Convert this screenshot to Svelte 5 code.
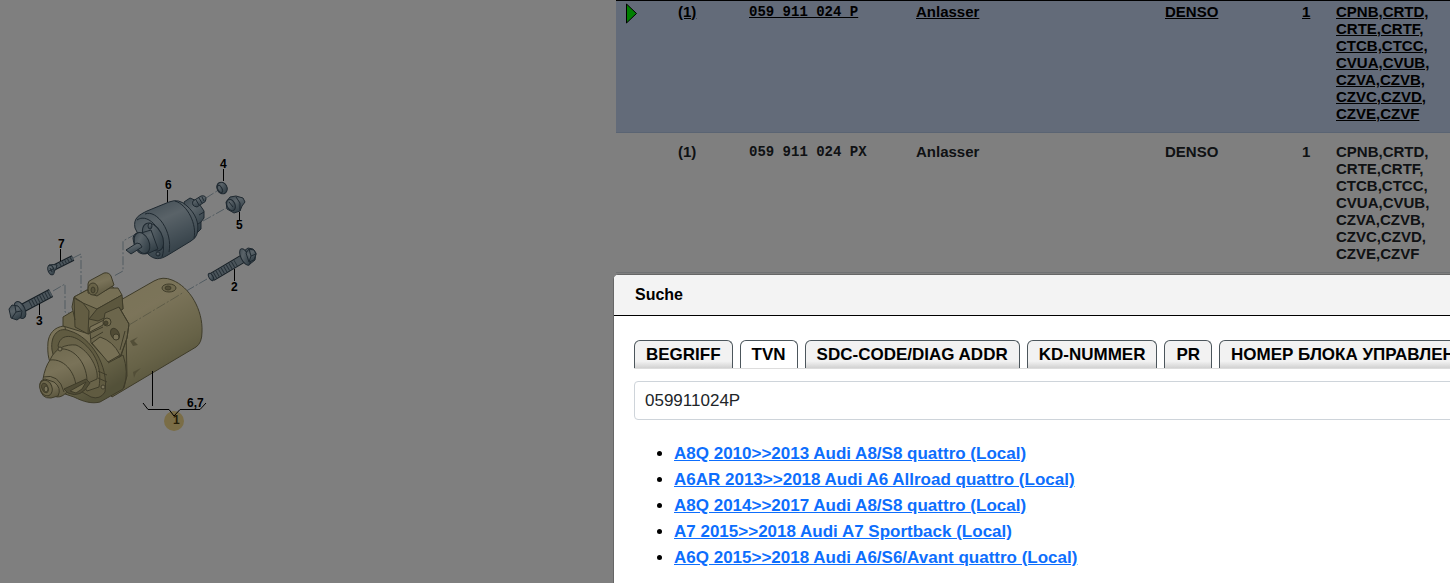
<script lang="ts">
	type Part = {
		qty: string;
		number: string;
		name: string;
		remark: string;
		count: string;
		engines: string[];
		selected?: boolean;
	};

	const engines = [
		'CPNB,CRTD,',
		'CRTE,CRTF,',
		'CTCB,CTCC,',
		'CVUA,CVUB,',
		'CZVA,CZVB,',
		'CZVC,CZVD,',
		'CZVE,CZVF'
	];

	const parts: Part[] = [
		{ qty: '(1)', number: '059 911 024 P', name: 'Anlasser', remark: 'DENSO', count: '1', engines, selected: true },
		{ qty: '(1)', number: '059 911 024 PX', name: 'Anlasser', remark: 'DENSO', count: '1', engines }
	];

	const tabs = ['BEGRIFF', 'TVN', 'SDC-CODE/DIAG ADDR', 'KD-NUMMER', 'PR', 'НОМЕР БЛОКА УПРАВЛЕНИЯ'];

	const results = [
		'A8Q 2010>>2013 Audi A8/S8 quattro (Local)',
		'A6AR 2013>>2018 Audi A6 Allroad quattro (Local)',
		'A8Q 2014>>2017 Audi A8/S8 quattro (Local)',
		'A7 2015>>2018 Audi A7 Sportback (Local)',
		'A6Q 2015>>2018 Audi A6/S6/Avant quattro (Local)'
	];

	let activeTab = $state('TVN');
	let query = $state('059911024P');
</script>

<div class="page">
	<section class="drawing">
		<svg viewBox="0 0 270 440" width="270" height="440" role="img" aria-label="Anlasser">
			<defs>
				<linearGradient id="housing" x1="0" y1="0" x2="0.5" y2="1">
					<stop offset="0" stop-color="#f2e4ae"></stop>
					<stop offset="0.4" stop-color="#f8e9b4"></stop>
					<stop offset="0.75" stop-color="#cfc690"></stop>
					<stop offset="1" stop-color="#a7a273"></stop>
				</linearGradient>
				<linearGradient id="cone" x1="0.3" y1="0" x2="0.7" y2="1">
					<stop offset="0" stop-color="#e0d4a0"></stop>
					<stop offset="0.4" stop-color="#f4e6b2"></stop>
					<stop offset="1" stop-color="#b6ac7c"></stop>
				</linearGradient>
				<linearGradient id="steel" x1="0.2" y1="0" x2="0.7" y2="1">
					<stop offset="0" stop-color="#8298a6"></stop>
					<stop offset="0.35" stop-color="#b4c6d1"></stop>
					<stop offset="0.65" stop-color="#8ba1af"></stop>
					<stop offset="1" stop-color="#5c7584"></stop>
				</linearGradient>
			</defs>

			<g class="guide">
				<path d="M136 234 L123 241 V271 L114 276"></path>
				<path d="M73 258 L81 254 V294"></path>
				<path d="M53 291 L65 284 V312 L72 314"></path>
				<path d="M207 279 L176 297"></path>
				<path d="M206 198 L217 191"></path>
				<path d="M203 221 L228 207"></path>
			</g>

			<!-- solenoid -->
			<g class="part" fill="url(#steel)">
				<path d="M184 202 L190 198 L197 201 L202 208 L204 211 V218 L201 222 V229 L197 233 L190 230 Z"></path>
				<path d="M193 201 L201 196 Q206 195 206 199 Q206 202 203 203 L197 207 Q191 206 193 201 Z"></path>
				<path d="M135 228 C133 218 139 215 147 211 L169 202 Q179 198 187 206 C195 213 200 223 197 234 Q196 238 191 241 L168 255 C160 260 154 260 148 254 Z"></path>
				<path d="M137 220 C150 211 169 237 162 257" fill="none"></path>
				<path d="M145 214 C157 209 173 232 169 252" fill="none"></path>
				<path d="M175 201 C188 205 197 225 194 238" fill="none"></path>
				<ellipse cx="153" cy="237" rx="9" ry="15" transform="rotate(-28 153 237)"></ellipse>
				<path d="M133 238 Q134 232 141 233 L151 230 L158 249 L149 253 Q135 258 133 238 Z"></path>
				<ellipse cx="142" cy="243" rx="7" ry="11" transform="rotate(-25 142 243)"></ellipse>
				<path d="M126 250 L137 243 Q141 243 142 247 L131 254 Z"></path>
				<ellipse cx="150" cy="226" rx="2" ry="3"></ellipse>
				<circle cx="158" cy="254" r="2"></circle>
				<path d="M196 200 l3 5 M199 198 l3 5 M202 197 l2 4 M199 215 l5 -3 M198 224 l3 -2"></path>
			</g>

			<!-- nut and cap -->
			<g class="part" fill="url(#steel)">
				<ellipse cx="222" cy="188" rx="5" ry="6" transform="rotate(-30 222 188)"></ellipse>
				<ellipse cx="220" cy="189" rx="2" ry="4" transform="rotate(-30 220 189)"></ellipse>
				<path d="M226 202 L230 197 L236 196 L243 198 L245 202 L242 206 L240 211 L234 213 L227 209 Z"></path>
				<ellipse cx="231" cy="205" rx="4" ry="6" transform="rotate(-25 231 205)"></ellipse>
				<path d="M236 197 L240 203 L240 211 M229 202 l4 5"></path>
			</g>

			<!-- bolt 2 -->
			<g class="bolt">
				<path class="shaft-edge" d="M212 277 L244 258"></path>
				<path class="shaft" d="M212 277 L244 258"></path>
				<path class="thread" d="M212 277 L236 263"></path>
			</g>
			<g class="part" fill="url(#steel)">
				<ellipse cx="211" cy="277" rx="2" ry="4" transform="rotate(-30 211 277)"></ellipse>
				<path d="M244 251 L248 248 L253 249 L256 253 L255 260 L250 264 L245 263 Z"></path>
				<ellipse cx="245" cy="257" rx="4" ry="9" transform="rotate(-26 245 257)"></ellipse>
				<path d="M246 253 L249 249 L254 250 L256 254 L254 260 L249 262 Z"></path>
				<path d="M249 249 L251 256 L249 262 M251 256 L256 254"></path>
			</g>

			<!-- bolt 3 -->
			<g class="bolt">
				<path class="shaft-edge" d="M21 309 L51 293"></path>
				<path class="shaft" d="M21 309 L51 293"></path>
				<path class="thread" d="M30 304 L51 293"></path>
			</g>
			<g class="part" fill="url(#steel)">
				<ellipse cx="20" cy="310" rx="5" ry="9" transform="rotate(-25 20 310)"></ellipse>
				<path d="M9 309 L12 305 L18 306 L22 311 L21 317 L17 320 L11 318 Z"></path>
				<path d="M15 306 L16 312 L12 318 M16 312 L21 311"></path>
			</g>

			<!-- screw 7 -->
			<g class="bolt small">
				<path class="shaft-edge" d="M53 268 L73 258"></path>
				<path class="shaft" d="M53 268 L73 258"></path>
				<path class="thread" d="M60 265 L73 258"></path>
			</g>
			<g class="part" fill="url(#steel)">
				<path d="M49 265 Q54 264 57 265 L56 269 L52 274 Z"></path>
				<ellipse cx="51" cy="270" rx="3" ry="5" transform="rotate(-20 51 270)"></ellipse>
				<path d="M50 268 l2 4 M49 271 l4 -2"></path>
			</g>

			<!-- starter motor -->
			<g class="starter">
				<path fill="url(#housing)" d="M112 305 L154 281 Q163 276 172 280 C190 287 203 310 202 332 Q202 343 196 347 L112 397 L90 370 Z"></path>
				<path fill="url(#housing)" d="M64 326 C54 327 49 334 48 342 C47 355 49 363 55 372 L65 394 L74 397 C84 402 92 404 100 402 L123 389 L127 376 L126 330 L118 304 L85 312 Z"></path>
				<path fill="#d6ca94" d="M63 326 V317 L73 311 L72 307 L74 297 L87 290 L111 285 L122 297 L123 309 L104 320 L90 327 L89 334 Z"></path>
				<path fill="#ecdea8" d="M74 297 L87 290 L97 295 L110 288 L118 288 L122 295 L97 309 L83 303 Z"></path>
				<path fill="#b8af7c" d="M97 309 L122 295 L123 309 L98 321 L89 319 Z"></path>
				<path fill="url(#cone)" d="M88 293 V284 Q88 281 91 280 L104 273 Q109 272 111 276 L114 285 L97 296 Z"></path>
				<ellipse fill="#d0c58f" cx="93" cy="289" rx="5" ry="6"></ellipse>
				<ellipse cx="93" cy="290" rx="2" ry="3" fill="#b0a778"></ellipse>
				<path fill="#c6bb87" d="M74 298 L83 303 L89 311 L88 334 L75 327 Z"></path>
				<path fill="#d9cd99" d="M90 332 L103 325 L105 313 L119 307 L129 324 L127 338 L120 357 L103 356 L91 343 Z"></path>
				<path d="M119 307 L129 324 L127 338 L121 356 M125 331 L120 350"></path>
				<circle cx="107" cy="322" r="4" fill="#e7d99f"></circle>
				<circle cx="106" cy="323" r="2" fill="#988f64"></circle>
				<ellipse cx="115" cy="334" rx="4" ry="6" fill="#a0976b" transform="rotate(-28 115 334)"></ellipse>
				<ellipse cx="116" cy="337" rx="3" ry="3" fill="#f1e3ae"></ellipse>
				<path fill="#eee0aa" d="M92 343 L100 337 Q113 341 120 355 L108 362 Z"></path>
				<path d="M88 334 L103 327 M91 339 L103 332 M65 327 L66 333 M73 311 L75 320"></path>
				<path fill="#c0b682" d="M52 350 C50 335 59 326 70 331 C91 337 109 366 105 392 Q100 400 91 397 L59 379 Z"></path>
				<path fill="#d2c793" d="M58 346 C60 334 72 334 82 342 C96 353 102 368 99 387 L87 391 Z"></path>
				<path fill="url(#cone)" d="M50 360 C55 348 66 344 76 345 C90 351 99 370 97 379 L66 393 Q60 399 54 396 L43 379 Q45 367 50 360 Z"></path>
				<path d="M50 360 C66 358 77 376 76 390 M59 349 C75 347 88 365 87 384 M43 377 Q59 373 64 392"></path>
				<path fill="#a0986c" d="M64 389 L86 379 L90 383 Q81 399 68 393 Z"></path>
				<path fill="#e1d49c" d="M70 391 L86 382 L82 389 L76 393 Z"></path>
				<path fill="url(#cone)" d="M40 387 Q39 380 45 379 L54 382 Q62 388 58 396 L51 398 Q41 399 40 387 Z"></path>
				<ellipse cx="46" cy="388" rx="6" ry="8" fill="#d9cc97" transform="rotate(-22 46 388)"></ellipse>
				<ellipse cx="45" cy="388" rx="3" ry="5" fill="#aaa071" transform="rotate(-22 45 388)"></ellipse>
				<ellipse cx="46" cy="389" rx="2" ry="3" fill="#f5e8b7"></ellipse>
				<circle cx="60" cy="349" r="2" fill="#f5e8b7"></circle>
				<circle cx="103" cy="387" r="2" fill="#f5e8b7"></circle>
				<path d="M98 371 L107 375 M98 378 L107 382 M108 363 L123 355 Q129 372 124 388"></path>
				<path fill="#a59c6f" stroke="none" d="M130 341 L138 337 L134 341 L138 345 L133 346 Z"></path>
				<path fill="#a59c6f" stroke="none" d="M133 372 L141 368 L136 373 L134 378 Z"></path>
				<ellipse cx="169" cy="288" rx="7" ry="4" fill="#dfd29c"></ellipse>
				<ellipse cx="168" cy="288" rx="3" ry="2" fill="#a49b6e"></ellipse>
				<path class="axis" d="M129 325 L176 297 L184 292"></path>
			</g>

			<circle class="hotspot" cx="174" cy="421" r="10"></circle>
			<g class="leader">
				<path d="M223.5 169 V181 M167.5 190 V202 M239.5 212 V220 M60.5 249 V261 M234.5 269 V281 M39.5 304 V315 M152.5 371 V406"></path>
				<path d="M143 403 L148 409.5 H169 L174 416 L180 409.5 H200 L206 403"></path>
			</g>
			<g class="label">
				<text x="220" y="168">4</text>
				<text x="165" y="189">6</text>
				<text x="236" y="229">5</text>
				<text x="58" y="248">7</text>
				<text x="231" y="291">2</text>
				<text x="36" y="325">3</text>
				<text x="187" y="407">6,7</text>
				<text class="current" x="173" y="424">1</text>
			</g>
		</svg>
	</section>

	<section class="parts">
		<table>
			<colgroup>
				<col class="c-mark" />
				<col class="c-qty" />
				<col class="c-number" />
				<col class="c-name" />
				<col class="c-remark" />
				<col class="c-count" />
				<col class="c-engines" />
			</colgroup>
			<tbody>
				{#each parts as part (part.number)}
					<tr class:selected={part.selected}>
						<td>
							{#if part.selected}
								<svg class="marker" viewBox="0 0 12 22" width="12" height="22" aria-hidden="true">
									<path d="M0.5 1 V20 L10.5 10.5 Z" fill="#00ff00" stroke="#000" stroke-width="1"></path>
								</svg>
							{/if}
						</td>
						<td>{part.qty}</td>
						<td class="number">{part.number}</td>
						<td>{part.name}</td>
						<td>{part.remark}</td>
						<td>{part.count}</td>
						<td>
							{#each part.engines as line}
								<div>{line}</div>
							{/each}
						</td>
					</tr>
				{/each}
			</tbody>
		</table>
	</section>
</div>

<div class="backdrop">
	<div class="dialog" role="dialog" aria-labelledby="dialog-title">
		<header id="dialog-title">Suche</header>
		<div class="content">
			<div class="tabs" role="tablist">
				{#each tabs as tab}
					<button
						type="button"
						role="tab"
						class:active={tab === activeTab}
						aria-selected={tab === activeTab}
						onclick={() => (activeTab = tab)}>{tab}</button
					>
				{/each}
			</div>
			<input type="text" aria-label={activeTab} bind:value={query} />
			<ul>
				{#each results as result}
					<li><a href="#result">{result}</a></li>
				{/each}
			</ul>
		</div>
	</div>
</div>

<style>
	:global(body) {
		background: #fff;
		color: #212529;
		font-family: 'Liberation Sans', Arial, sans-serif;
	}

	.page {
		display: flex;
		height: 100vh;
		overflow: hidden;
	}

	.drawing {
		flex: none;
		width: 616px;
	}

	.drawing svg {
		display: block;
	}

	.part {
		stroke: #3d5160;
		stroke-width: 1;
		stroke-linejoin: round;
	}

	.guide path {
		fill: none;
		stroke: #a3b6c2;
		stroke-dasharray: 9 2 2 2;
	}

	.bolt path {
		fill: none;
	}

	.shaft-edge {
		stroke: #2b3c48;
		stroke-width: 9;
	}

	.shaft {
		stroke: #97aab7;
		stroke-width: 7;
	}

	.thread {
		stroke: #4c606d;
		stroke-width: 7;
		stroke-dasharray: 1 2;
	}

	.small .shaft-edge {
		stroke-width: 6;
	}

	.small .shaft {
		stroke-width: 4;
	}

	.small .thread {
		stroke-width: 4;
	}

	.starter {
		fill: none;
		stroke: #7d7753;
		stroke-width: 1;
		stroke-linejoin: round;
	}

	.starter .axis {
		stroke: #bdb88f;
		stroke-dasharray: 10 2 2 2;
	}

	.leader path {
		fill: none;
		stroke: #000;
		stroke-width: 1;
	}

	.hotspot {
		fill: #f4da8c;
	}

	.label {
		fill: #000;
		font-size: 12px;
		font-weight: 700;
	}

	.label .current {
		fill: #4a3c10;
	}

	.parts {
		flex: 1;
		min-width: 0;
		overflow: hidden;
		border-top: 1px solid #000;
	}

	table {
		width: 100%;
		margin-top: -8px;
		border-collapse: collapse;
		table-layout: fixed;
		font-size: 15px;
		font-weight: 700;
		line-height: 17px;
	}

	.c-mark {
		width: 52px;
	}

	.c-qty {
		width: 71px;
	}

	.c-number {
		width: 167px;
	}

	.c-remark {
		width: 137px;
	}

	.c-count {
		width: 34px;
	}

	.c-engines {
		width: 124px;
	}

	td {
		padding: 10px 0 10px 10px;
		border-bottom: 1px solid #dee2e6;
		vertical-align: top;
	}

	.selected td {
		border-bottom-color: #b4c8e6;
		background: #c6d6f2;
		color: #000;
		text-decoration: underline;
	}

	.number {
		font-family: 'Liberation Mono', 'Courier New', monospace;
		font-size: 14px;
		line-height: 19px;
	}

	.marker {
		display: block;
	}

	.backdrop {
		position: fixed;
		inset: 0;
		overflow: hidden;
		background: rgba(0, 0, 0, 0.5);
	}

	.dialog {
		position: absolute;
		top: 274px;
		right: -220px;
		bottom: -40px;
		left: 613px;
		border: 1px solid #666;
		border-radius: 5px;
		background: #fff;
		color: #000;
	}

	header {
		padding: 0 21px;
		border-bottom: 1px solid #000;
		border-radius: 4px 4px 0 0;
		background: #f3f3f3;
		font-size: 16px;
		font-weight: 700;
		line-height: 40px;
	}

	.content {
		padding: 24px 20px;
	}

	.tabs {
		display: flex;
		gap: 7px;
		margin-bottom: 12px;
		border-bottom: 1px solid #ddd;
	}

	.tabs button {
		flex: none;
		height: 28px;
		padding: 0 11px;
		border: 1px solid #4c565c;
		border-bottom: 0;
		border-radius: 6px 6px 0 0;
		background: linear-gradient(#f2f2f2 75%, #d2d2d2);
		color: #000;
		font: 700 17px/26px 'Liberation Sans', Arial, sans-serif;
		white-space: nowrap;
	}

	.tabs button.active {
		background: #fff;
	}

	input {
		box-sizing: border-box;
		display: block;
		width: 100%;
		height: 39px;
		padding: 0 10px;
		border: 1px solid #ced4da;
		border-radius: 4px;
		background: #fff;
		color: #212529;
		font: 17px/24px 'Liberation Sans', Arial, sans-serif;
	}

	ul {
		margin: 21px 0 0;
		padding-left: 40px;
		font-size: 17px;
		line-height: 26px;
	}

	a {
		color: #0d6efd;
		font-weight: 700;
	}
</style>
